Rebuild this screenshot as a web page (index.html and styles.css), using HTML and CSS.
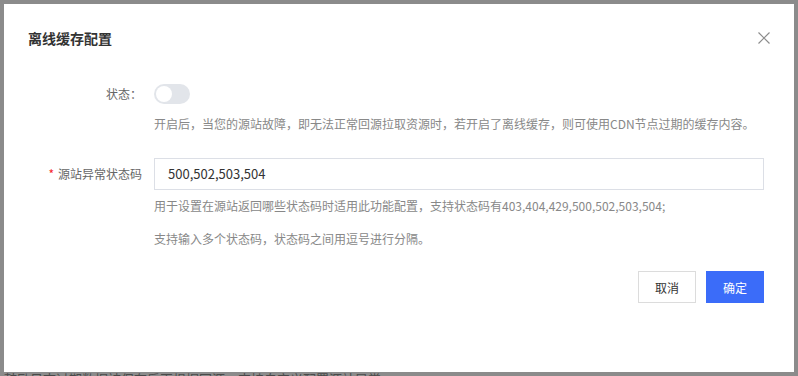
FILE: index.html
```html
<!DOCTYPE html>
<html lang="zh-CN">
<head>
<meta charset="utf-8">
<title>离线缓存配置</title>
<link rel="stylesheet" href="styles.css">
</head>
<body>
<div class="modal">
  <div class="modal-header">
    <h2 class="modal-title">离线缓存配置</h2>
    <span class="close" aria-label="关闭">
      <svg width="12" height="12" viewBox="0 0 12 12"><path d="M0.5 0.5 L11.5 11.5 M11.5 0.5 L0.5 11.5" stroke="#8c8c8c" stroke-width="1.2" fill="none"/></svg>
    </span>
  </div>
  <div class="modal-body">
    <div class="form-item item-status">
      <label class="form-label">状态：</label>
      <div class="form-control">
        <span class="switch"><span class="switch-knob"></span></span>
        <p class="help help-first">开启后，当您的源站故障，即无法正常回源拉取资源时，若开启了离线缓存，则可使用CDN节点过期的缓存内容。</p>
      </div>
    </div>
    <div class="form-item item-code">
      <label class="form-label"><span class="req">*</span>源站异常状态码</label>
      <div class="form-control">
        <div class="input">500,502,503,504</div>
        <p class="help help-a">用于设置在源站返回哪些状态码时适用此功能配置，支持状态码有403,404,429,500,502,503,504;</p>
        <p class="help help-b">支持输入多个状态码，状态码之间用逗号进行分隔。</p>
      </div>
    </div>
  </div>
  <div class="modal-footer">
    <button class="btn btn-default">取消</button>
    <button class="btn btn-primary">确定</button>
  </div>
</div>
<div class="behind">鼓励日志过期数据被保存后再根据回源，支持自定义配置源站异常</div>
</body>
</html>
```
FILE: styles.css
```css
html, body {
  margin: 0;
  padding: 0;
}
body {
  background: #8b8b8b;
  font-family: "Noto Sans CJK SC", "Microsoft YaHei", sans-serif;
  width: 798px;
  height: 376px;
  overflow: hidden;
}
.modal {
  margin: 4px 4px 0 4px;
  width: 790px;
  height: 368px;
  background: #fff;
  box-sizing: border-box;
  display: flex;
  flex-direction: column;
}
.modal-header {
  display: flex;
  justify-content: space-between;
  align-items: center;
  padding: 24px 24px 0 24px;
  height: 20px;
  box-sizing: content-box;
}
.modal-title {
  margin: 0;
  font-size: 14px;
  font-weight: 700;
  line-height: 20px;
  color: #333;
}
.close {
  display: flex;
  width: 12px;
  height: 12px;
}
.modal-body {
  padding: 36px 30px 0 0;
}
.form-item {
  display: grid;
  grid-template-columns: 138px 1fr;
  column-gap: 12px;
}
.form-label {
  text-align: right;
  font-size: 12px;
  color: #666;
  line-height: 20px;
}
.item-code {
  margin-top: 25px;
}
.item-code .form-label {
  line-height: 32px;
}
.req {
  color: #f5222d;
  margin-right: 4px;
}
.switch {
  display: block;
  width: 36px;
  height: 20px;
  border-radius: 10px;
  background: #e2e5ea;
  position: relative;
}
.switch-knob {
  position: absolute;
  left: 2px;
  top: 2px;
  width: 16px;
  height: 16px;
  border-radius: 50%;
  background: #fff;
}
.help {
  margin: 0;
  font-size: 12px;
  line-height: 18px;
  color: #888;
  white-space: nowrap;
}
.help-first {
  margin-top: 11px;
}
.help-a {
  margin-top: 7px;
}
.help-b {
  margin-top: 15px;
}
.input {
  height: 32px;
  box-sizing: border-box;
  border: 1px solid #dcdfe6;
  padding: 0 13px;
  font-size: 13px;
  line-height: 30px;
  color: #333;
}
.modal-footer {
  display: flex;
  justify-content: flex-end;
  gap: 10px;
  padding: 23px 30px 0 0;
}
.btn {
  width: 58px;
  height: 32px;
  box-sizing: border-box;
  font-family: inherit;
  font-size: 12px;
  border-radius: 0;
  cursor: pointer;
  padding: 0;
}
.btn-default {
  background: #fff;
  border: 1px solid #dcdcdc;
  color: #333;
}
.btn-primary {
  background: #3b6cf9;
  border: 1px solid #3b6cf9;
  color: #fff;
}
.behind {
  margin: 0 0 0 4px;
  font-size: 13px;
  line-height: 13px;
  color: #4a4a4a;
  white-space: nowrap;
  margin-top: -4px;
  padding-top: 4px;
}
```
